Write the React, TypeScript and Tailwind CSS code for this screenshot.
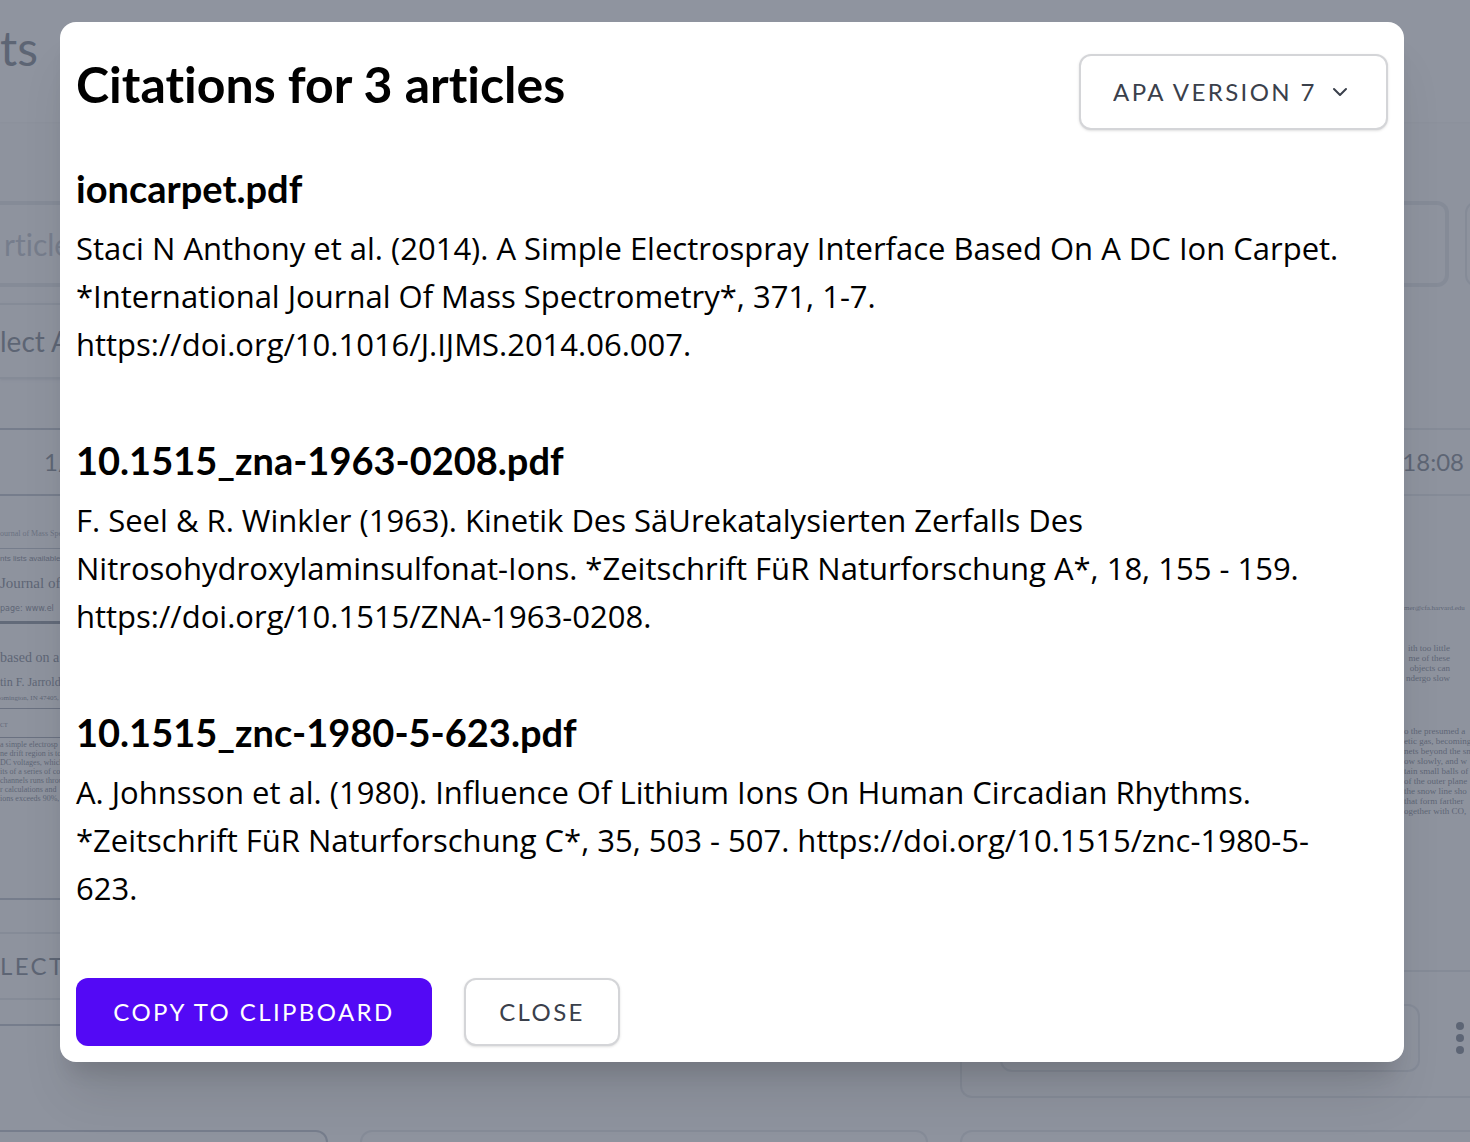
import React, { useState } from 'react';

interface Citation {
  file: string;
  text: string;
}

const citations: Citation[] = [
  {
    file: 'ioncarpet.pdf',
    text: 'Staci N Anthony et al. (2014). A Simple Electrospray Interface Based On A DC Ion Carpet. *International Journal Of Mass Spectrometry*, 371, 1-7. https://doi.org/10.1016/J.IJMS.2014.06.007.',
  },
  {
    file: '10.1515_zna-1963-0208.pdf',
    text: 'F. Seel & R. Winkler (1963). Kinetik Des SäUrekatalysierten Zerfalls Des Nitrosohydroxylaminsulfonat-Ions. *Zeitschrift FüR Naturforschung A*, 18, 155 - 159. https://doi.org/10.1515/ZNA-1963-0208.',
  },
  {
    file: '10.1515_znc-1980-5-623.pdf',
    text: 'A. Johnsson et al. (1980). Influence Of Lithium Ions On Human Circadian Rhythms. *Zeitschrift FüR Naturforschung C*, 35, 503 - 507. https://doi.org/10.1515/znc-1980-5-623.',
  },
];

const leftAbstract = [
  'a simple electrosp',
  'ne drift region is to t',
  'DC voltages, which',
  'its of a series of conc',
  'channels runs throug',
  'r calculations and',
  'ions exceeds 90%, a',
];

const rightIntro = ['ith too little', 'me of these', 'objects can', 'ndergo slow'];

const rightBody = [
  'o the presumed a',
  'etic gas, becoming',
  'nets beyond the sn',
  'ow slowly, and w',
  'tain small balls of',
  'of the outer plane',
  'the snow line sho',
  'that form farther',
  'ogether with CO,',
];

// First page preview of the article in the left column
const LeftPreview: React.FC = () => (
  <div className="h-[402px] overflow-hidden whitespace-nowrap pt-8 font-['Liberation_Serif',serif] text-gray-700">
    <p className="h-3 text-[8px] leading-3 text-gray-500">ournal of Mass Spec</p>
    <div className="mt-2 border-t border-gray-400" />
    <p className="h-5 font-['Liberation_Sans',sans-serif] text-[8px] leading-5">nts lists available</p>
    <p className="h-7 text-[15px] leading-7">Journal of</p>
    <p className="h-6 font-['DejaVu_Sans',sans-serif] text-[8px] leading-6">page: www.el</p>
    <div className="h-[3px] bg-gray-600" />
    <p className="mt-4 h-9 text-[14px] leading-9">based on a</p>
    <p className="h-3 text-[12px] leading-3">tin F. Jarrold</p>
    <p className="h-5 text-[7px] leading-5">omington, IN 47405, Un</p>
    <div className="border-t border-gray-500" />
    <p className="h-7 pt-1 text-[6px] leading-6">CT</p>
    <div className="border-t border-gray-500 pt-0.5">
      {leftAbstract.map((line) => (
        <p key={line} className="text-[8px] leading-[9px]">{line}</p>
      ))}
    </div>
  </div>
);

const RightPreview: React.FC = () => (
  <div className="h-[474px] overflow-hidden whitespace-nowrap pt-[107px] pl-[442px] font-['Liberation_Serif',serif] text-[9px] leading-[10px] text-gray-700">
    <p className="text-[7px]">mer@cfa.harvard.edu</p>
    <div className="mt-[30px] w-[46px] text-right">
      {rightIntro.map((line) => (
        <p key={line}>{line}</p>
      ))}
    </div>
    <div className="mt-[43px]">
      {rightBody.map((line) => (
        <p key={line}>{line}</p>
      ))}
    </div>
  </div>
);

const ArticlesPage: React.FC = () => (
  <div aria-hidden="true" className="h-full overflow-hidden bg-[#f5f5f7] text-[#374151]">
    <header className="h-[122px] bg-[#f9f9fb] pt-4 shadow-xs">
      <h1 className="text-[48px] leading-[64px]">ts</h1>
    </header>

    <div className="flex gap-4 pt-[79px]">
      <input
        type="text"
        tabIndex={-1}
        aria-label="Search articles"
        placeholder="rticles"
        className="h-[86px] w-[1449px] shrink-0 rounded-r-xl border-4 border-l-0 border-gray-300 pl-1 text-[30px] [font-variant-ligatures:none] placeholder:text-gray-400"
      />
      <div className="h-[86px] w-24 shrink-0 rounded-xl border-2 border-gray-300" />
    </div>

    <button tabIndex={-1} className="mt-4 block h-[76px] w-[240px] rounded-r-xl border-2 border-l-0 border-gray-300 text-left text-[28px] shadow-sm">
      lect All
    </button>

    <div className="mt-[49px] grid h-[670px] grid-cols-[328px_1fr_510px] items-start gap-8">
      <section className="border-y-2 border-gray-400">
        <p className="h-[66px] border-b-2 border-gray-400 pl-11 text-2xl leading-[64px]">1/</p>
        <LeftPreview />
        <div className="border-t-2 border-gray-400 pt-8 pb-6">
          <button tabIndex={-1} className="block h-[68px] w-[200px] rounded-r-xl border-2 border-l-0 border-gray-300 text-left text-2xl tracking-widest">
            LECT
          </button>
        </div>
      </section>
      <section className="rounded-xl border-2 border-gray-300" />
      <section className="overflow-hidden rounded-l-xl border-2 border-r-0 border-gray-300">
        <p className="h-[66px] border-b-2 border-gray-300 pr-1.5 text-right text-2xl leading-[64px]">18:08</p>
        <RightPreview />
        <div className="flex items-start gap-9 border-t-2 border-gray-300 pt-8 pb-6 pl-[38px]">
          <div className="h-[68px] w-[420px] shrink-0 rounded-xl border-2 border-gray-300" />
          <svg viewBox="0 0 8 34" className="mt-4 h-[34px] w-2 shrink-0 fill-gray-700">
            <circle cx="4" cy="6" r="4" />
            <circle cx="4" cy="18" r="4" />
            <circle cx="4" cy="30" r="4" />
          </svg>
        </div>
      </section>
    </div>

    <div className="mt-8 grid grid-cols-[328px_1fr_510px] gap-8">
      <section className="h-16 rounded-tr-xl border-2 border-l-0 border-gray-400" />
      <section className="h-16 rounded-t-xl border-2 border-gray-300" />
      <section className="h-16 rounded-tl-xl border-2 border-r-0 border-gray-300" />
    </div>
  </div>
);

export default function App() {
  const [style, setStyle] = useState('APA version 7');

  const copyAll = () => {
    navigator.clipboard?.writeText(citations.map((c) => c.text).join('\n\n'));
  };

  return (
    <div className="relative h-screen overflow-hidden font-['Lato',sans-serif]">
      <ArticlesPage />
      <div className="absolute inset-0 bg-[#6b7280]/75 px-4 pt-[22px] pr-[22px]">
        <div
          role="dialog"
          aria-modal="true"
          aria-labelledby="citations-title"
          className="mx-auto max-w-[1344px] rounded-2xl bg-white p-4 text-black shadow-[0_40px_50px_-10px_rgba(0,0,0,0.1),0_20px_20px_-10px_rgba(0,0,0,0.1)]"
        >
          <div className="flex items-start justify-between pt-4">
            <h2 id="citations-title" className="text-[50px] leading-[60px] font-bold [font-variant-ligatures:none]">
              Citations for 3 articles
            </h2>
            <div className="relative">
              <select
                aria-label="Citation style"
                value={style}
                onChange={(e) => setStyle(e.target.value)}
                className="h-[76px] w-[309px] appearance-none rounded-xl border-2 border-[#d4d5d8] bg-white pl-8 text-2xl tracking-widest text-[#3a404b] uppercase shadow-sm"
              >
                <option>APA version 7</option>
                <option>MLA version 9</option>
              </select>
              <svg
                viewBox="0 0 16 16"
                className="pointer-events-none absolute top-[30px] right-10 size-4 fill-none stroke-[#3a404b] stroke-2"
                strokeLinecap="round"
                strokeLinejoin="round"
              >
                <path d="M2 5l6 6 6-6" />
              </svg>
            </div>
          </div>

          <div className="flex flex-col gap-14 pt-[34px] pb-[54px]">
            {citations.map((c) => (
              <article key={c.file}>
                <h3 className="text-[38px] leading-[48px] font-bold">{c.file}</h3>
                <p className="mt-3 pr-8 pb-3 font-['Open_Sans',sans-serif] text-[31px] leading-[48px]">{c.text}</p>
              </article>
            ))}
          </div>

          <div className="flex gap-8">
            <button
              onClick={copyAll}
              className="h-[68px] w-[356px] rounded-xl bg-[#5309f5] text-2xl tracking-widest text-white uppercase"
            >
              Copy to clipboard
            </button>
            <button className="h-[68px] w-[156px] rounded-xl border-2 border-[#d4d5d8] bg-white text-2xl tracking-widest text-[#3a404b] uppercase shadow-sm">
              Close
            </button>
          </div>
        </div>
      </div>
    </div>
  );
}
